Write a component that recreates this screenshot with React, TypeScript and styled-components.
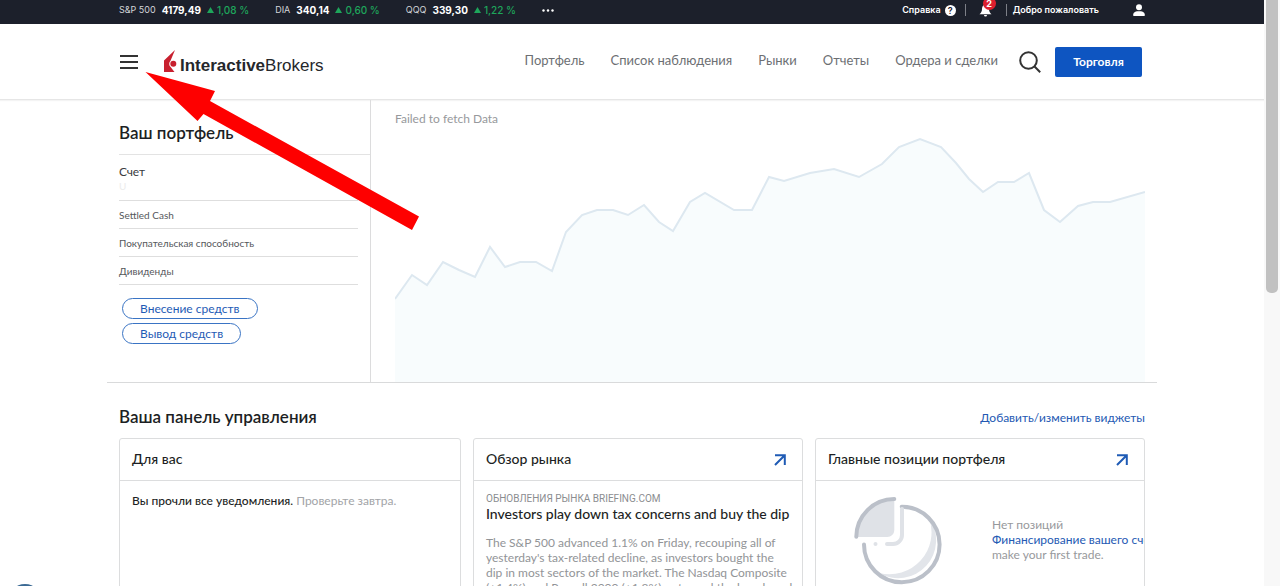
import React from "react";
import styled, { createGlobalStyle } from "styled-components";

const GlobalStyle = createGlobalStyle`
  *, *::before, *::after { box-sizing: border-box; }
  body { margin: 0; background: #fff; color: #1d1f24; font-family: Lato, "Noto Sans", sans-serif; font-size: 12px; line-height: 15px; }
  a { text-decoration: none; color: inherit; }
  h1, h2, h3, p { margin: 0; }
  button { font-family: inherit; cursor: pointer; }
`;

const Window = styled.div`
  display: flex;
  height: 100vh;
  overflow: hidden;
`;
const Page = styled.div`
  flex: 1;
  min-width: 0;
`;
const ScrollTrack = styled.div`
  width: 16px;
  padding: 0 2px;
  background: #f8f8f8;
`;
const ScrollThumb = styled.div`
  height: 50%;
  background: #c1c1c1;
  border-radius: 0 0 5px 5px;
`;
const Container = styled.div`
  position: relative;
  display: flex;
  align-items: center;
  max-width: 1050px;
  margin: 0 auto;
  padding: 0 12px;
`;

const TopBar = styled.div`
  background: #1c202b;
  color: #fff;
  font: 600 9px/20px Inter, sans-serif;
  padding-bottom: 4px;
`;
const Tickers = styled.div`
  display: flex;
  gap: 26px;
  flex: 1;
`;
const Ticker = styled.div`
  display: flex;
  gap: 6px;
`;
const Symbol = styled.span`
  font-weight: 400;
  color: #d3d5d9;
`;
const Price = styled.span`
  font-size: 10px;
  font-weight: 700;
`;
const Change = styled.span`
  display: flex;
  align-items: center;
  gap: 3px;
  font-size: 10px;
  font-weight: 500;
  color: #1ea65b;
`;
const MoreButton = styled.button`
  border: 0;
  padding: 0;
  background: none;
  display: flex;
  align-items: center;
`;
const UserTools = styled.div`
  display: flex;
  align-items: center;
`;
const HelpLink = styled.a`
  display: flex;
  align-items: center;
  gap: 4px;
  padding-right: 9px;
`;
const HelpMark = styled.span`
  width: 11px;
  height: 11px;
  border-radius: 50%;
  background: #fff;
  color: #1c202b;
  text-align: center;
  line-height: 11px;
`;
const Divider = styled.span`
  width: 1px;
  height: 12px;
  background: #7d8088;
`;
const BellButton = styled.button`
  position: relative;
  display: flex;
  border: 0;
  background: none;
  padding: 0 14px 0 13px;
`;
const Badge = styled.span`
  position: absolute;
  left: 17px;
  top: -7px;
  width: 13px;
  height: 13px;
  border-radius: 50%;
  background: #dc1f2e;
  color: #fff;
  font: 700 9px/13px Inter, sans-serif;
  text-align: center;
`;
const Welcome = styled.span`
  padding: 0 34px 0 6px;
`;
const UserButton = styled.button`
  display: flex;
  border: 0;
  background: none;
  padding: 0;
`;

const Header = styled.header`
  border-bottom: 1px solid #e6e6e6;
  box-shadow: 0 1px 1px #f4f4f4;
`;
const HeaderRow = styled(Container)`
  height: 75px;
`;
const MenuButton = styled.button`
  display: flex;
  border: 0;
  background: none;
  padding: 0 26px 0 1px;
`;
const Logo = styled.a`
  display: flex;
  align-items: flex-end;
  gap: 3px;
  padding-bottom: 2px;
  color: #25272b;
  font: 17px/18px "Liberation Sans", Arial, sans-serif;
`;
const LogoText = styled.span`
  height: 15px;
`;
const Nav = styled.nav`
  display: flex;
  gap: 26px;
  margin-left: auto;
  padding-bottom: 4px;
  font-size: 13px;
  line-height: 16px;
  color: #6d6f73;
`;
const SearchButton = styled.button`
  display: flex;
  border: 0;
  background: none;
  padding: 0;
  margin: 0 14px 0 21px;
`;
const TradeButton = styled.button`
  height: 30px;
  min-width: 87px;
  padding: 0 16px;
  margin-right: 3px;
  border: 0;
  border-radius: 2px;
  background: #0e55c1;
  color: #fff;
  font-size: 12px;
  font-weight: 700;
`;
const Pointer = styled.svg`
  position: absolute;
  left: 38px;
  top: 47px;
  z-index: 2;
  pointer-events: none;
`;

const Hero = styled.section`
  display: flex;
  max-width: 1050px;
  margin: 0 auto;
  border-bottom: 1px solid #d9dadb;
`;
const Portfolio = styled.div`
  width: 264px;
  padding-left: 12px;
  border-right: 1px solid #dcdcdd;
`;
const PortfolioTitle = styled.h1`
  padding: 22px 0 10px;
  border-bottom: 1px solid #e3e3e3;
  font-size: 17px;
  font-weight: 600;
  line-height: 22px;
`;
const Figures = styled.div`
  margin-right: 12px;
`;
const Account = styled.div`
  height: 46px;
  padding-top: 9px;
  border-bottom: 1px solid #dedede;
  font-size: 12px;
  line-height: 15px;
  color: #3a3c40;
`;
const AccountId = styled.div`
  font-size: 10px;
  color: #ececec;
`;
const Figure = styled.div`
  height: 28px;
  border-bottom: 1px solid #dedede;
  font-size: 10px;
  line-height: 29px;
  color: #55575b;
`;
const Actions = styled.div`
  display: flex;
  flex-direction: column;
  align-items: flex-start;
  gap: 4px;
  padding: 13px 3px 38px;
`;
const PillButton = styled.button`
  height: 21px;
  padding: 0 17px 1px;
  border: 1px solid #3a74c4;
  border-radius: 11px;
  background: #fff;
  color: #1f5bb5;
  font-size: 12px;
  line-height: 15px;
`;
const ChartPanel = styled.div`
  flex: 1;
  display: flex;
  flex-direction: column;
  padding: 11px 12px 0 24px;
  color: #97999c;
`;
const Chart = styled.svg`
  display: block;
  width: 100%;
  height: 250px;
  margin-top: auto;
`;
const ChartStatus = styled.p`
  height: 21px;
`;

const Dashboard = styled.main`
  max-width: 1050px;
  margin: 0 auto;
  padding: 23px 12px 0;
`;
const DashboardHead = styled.div`
  display: flex;
  align-items: center;
  justify-content: space-between;
  padding-bottom: 10px;
`;
const DashboardTitle = styled.h2`
  font-size: 17px;
  font-weight: 600;
  line-height: 22px;
`;
const TextLink = styled.a`
  color: #2459b3;
`;
const Cards = styled.div`
  display: grid;
  grid-template-columns: 342fr 330fr 330fr;
  gap: 12px;
`;
const Card = styled.section`
  min-width: 0;
  height: 260px;
  border: 1px solid #dcddde;
  border-radius: 3px;
  overflow: hidden;
`;
const CardHead = styled.div`
  display: flex;
  align-items: center;
  justify-content: space-between;
  height: 42px;
  padding: 0 16px 0 12px;
  border-bottom: 1px solid #dcddde;
`;
const CardTitle = styled.h3`
  padding-bottom: 2px;
  font-size: 14px;
  font-weight: 500;
  line-height: 18px;
`;
const CardBody = styled.div`
  padding: 12px;
`;
const Muted = styled.span`
  color: #a2a4a7;
`;
const Notice = styled.p`
  font-weight: 500;
  ${Muted} { font-weight: 400; }
`;
const Source = styled.p`
  font: 10px/12px Roboto, sans-serif;
  color: #8b8d90;
`;
const Headline = styled.h3`
  font-size: 14px;
  font-weight: 500;
  line-height: 18px;
  white-space: nowrap;
`;
const Story = styled.p`
  margin-top: 12px;
  color: #929497;
  white-space: nowrap;
`;
const EmptyState = styled.div`
  display: flex;
  align-items: flex-start;
  gap: 49px;
  padding: 15px 0 0 37px;
  color: #97999c;
  white-space: nowrap;
`;
const EmptyText = styled.div`
  padding-top: 21px;
`;
const Drawing = styled.svg`
  flex: none;
`;
const ChatButton = styled.button`
  position: fixed;
  left: 8px;
  bottom: -32px;
  width: 34px;
  height: 34px;
  border: 2px solid #3b6a94;
  border-radius: 50%;
  background: #fff;
`;

const tickers = [
  ["S&P 500", "4179,49", "1,08 %"],
  ["DIA", "340,14", "0,60 %"],
  ["QQQ", "339,30", "1,22 %"],
];
const sections = ["Портфель", "Список наблюдения", "Рынки", "Отчеты", "Ордера и сделки"];
const figures = ["Settled Cash", "Покупательская способность", "Дивиденды"];
const series =
  "0,167 17,143 32,153 48,130 64,138 80,145 95,115 110,135 125,130 141,130 157,139 171,100 187,83 202,78 218,78 233,83 249,73 264,90 278,99 295,70 310,61 339,78 357,78 374,45 389,49 415,41 439,37 464,45 487,32 504,15 525,7 546,15 561,31 574,47 588,60 603,50 619,50 634,41 649,78 665,90 683,74 698,70 715,70 750,60";

const OpenIcon = () => (
  <svg width="12" height="12" viewBox="0 0 12 12" fill="none" stroke="#1f5bb5" strokeWidth="2">
    <path d="M1 1.2H10.8V11M10.5 1.5L1 11" />
  </svg>
);

const PieDrawing = () => (
  <Drawing width="90" height="90" viewBox="0 0 90 90" fill="none" strokeLinecap="round">
    <path d="M41.3 3V34a7 7 0 0 1-7 7H4A38 38 0 0 1 41.3 3Z" fill="#dfe2e7" />
    <path d="M76 22A38 38 0 0 1 26 77A42 42 0 0 0 76 22Z" fill="#e2e5ea" />
    <path d="M3.3 40.8A38 38 0 0 1 41.3 3" stroke="#bbc0c9" strokeWidth="4" />
    <path d="M48.7 10.7A37.8 37.8 0 1 1 11 48.5" stroke="#bbc0c9" strokeWidth="4" />
    <path d="M49 13V39a9 9 0 0 1-9 9H34" stroke="#dfe2e7" strokeWidth="4" />
    <circle cx="22.5" cy="48" r="2" fill="#dfe2e7" />
  </Drawing>
);

export default function App() {
  return (
    <Window>
      <GlobalStyle />
      <Page>
        <TopBar>
          <Container>
            <Tickers>
              {tickers.map(([symbol, price, change]) => (
                <Ticker key={symbol}>
                  <Symbol>{symbol}</Symbol>
                  <Price>{price}</Price>
                  <Change>
                    <svg width="7" height="6" viewBox="0 0 7 6">
                      <path d="M3.5 0L7 6H0Z" fill="#1ea65b" />
                    </svg>
                    {change}
                  </Change>
                </Ticker>
              ))}
              <MoreButton aria-label="Ещё">
                <svg width="12" height="3" viewBox="0 0 12 3" fill="#fff">
                  <circle cx="1.5" cy="1.5" r="1.2" />
                  <circle cx="6" cy="1.5" r="1.2" />
                  <circle cx="10.5" cy="1.5" r="1.2" />
                </svg>
              </MoreButton>
            </Tickers>
            <UserTools>
              <HelpLink href="#help">
                Справка<HelpMark>?</HelpMark>
              </HelpLink>
              <Divider />
              <BellButton aria-label="Уведомления">
                <svg width="13" height="13" viewBox="0 0 13 13" fill="#fff">
                  <path d="M6.5 0.5C4 0.8 3 2.8 3 5C3 7.6 2 8.8 0.5 10.3H12.5C11 8.8 10 7.6 10 5C10 2.8 9 0.8 6.5 0.5ZM5 11A1.5 1.5 0 0 0 8 11Z" />
                </svg>
                <Badge>2</Badge>
              </BellButton>
              <Divider />
              <Welcome>Добро пожаловать</Welcome>
              <UserButton aria-label="Профиль">
                <svg width="12" height="12" viewBox="0 0 12 12" fill="#fff">
                  <circle cx="6" cy="3.2" r="3" />
                  <path d="M0.3 12V10.2C0.3 8.4 2.4 7.5 4.2 7.2H7.8C9.6 7.5 11.7 8.4 11.7 10.2V12Z" />
                </svg>
              </UserButton>
            </UserTools>
          </Container>
        </TopBar>
        <Header>
          <HeaderRow>
            <MenuButton aria-label="Меню">
              <svg width="18" height="14" viewBox="0 0 18 14" stroke="#333" strokeWidth="2">
                <path d="M0 1H18M0 7H18M0 13H18" />
              </svg>
            </MenuButton>
            <Logo href="#home">
              <svg width="13" height="22" viewBox="0 0 13 22">
                <path d="M11 0L0 10.5V22H10.5L6.6 17C4.9 15.5 4.6 12.6 6.6 10.5Z" fill="#c8202f" />
                <circle cx="9.3" cy="13.8" r="3" fill="#c8202f" />
              </svg>
              <LogoText>
                <b>Interactive</b>Brokers
              </LogoText>
            </Logo>
            <Nav>
              {sections.map((name) => (
                <a key={name} href="#section">
                  {name}
                </a>
              ))}
            </Nav>
            <SearchButton aria-label="Поиск">
              <svg width="22" height="22" viewBox="0 0 22 22" fill="none" stroke="#333" strokeWidth="2">
                <circle cx="9.5" cy="9.5" r="8.3" />
                <path d="M15.3 15.3L21.2 21.2" />
              </svg>
            </SearchButton>
            <TradeButton>Торговля</TradeButton>
            <Pointer width="276" height="160" viewBox="0 0 276 160" aria-hidden="true">
              <path d="M0.5 1L70 20L65 30L274 145.5L267 159L58.5 43L52.5 50Z" fill="#fe0000" />
            </Pointer>
          </HeaderRow>
        </Header>
        <Hero>
          <Portfolio>
            <PortfolioTitle>Ваш портфель</PortfolioTitle>
            <Figures>
              <Account>
                Счет
                <AccountId>U</AccountId>
              </Account>
              {figures.map((name) => (
                <Figure key={name}>{name}</Figure>
              ))}
            </Figures>
            <Actions>
              <PillButton>Внесение средств</PillButton>
              <PillButton>Вывод средств</PillButton>
            </Actions>
          </Portfolio>
          <ChartPanel>
            <ChartStatus>Failed to fetch Data</ChartStatus>
            <Chart viewBox="0 0 750 250" preserveAspectRatio="none">
              <polygon points={`0,250 ${series} 750,250`} fill="#f8fcfd" />
              <polyline points={series} fill="none" stroke="#dde8f0" strokeWidth="2" />
            </Chart>
          </ChartPanel>
        </Hero>
        <Dashboard>
          <DashboardHead>
            <DashboardTitle>Ваша панель управления</DashboardTitle>
            <TextLink href="#widgets">Добавить/изменить виджеты</TextLink>
          </DashboardHead>
          <Cards>
            <Card>
              <CardHead>
                <CardTitle>Для вас</CardTitle>
              </CardHead>
              <CardBody>
                <Notice>
                  Вы прочли все уведомления. <Muted>Проверьте завтра.</Muted>
                </Notice>
              </CardBody>
            </Card>
            <Card>
              <CardHead>
                <CardTitle>Обзор рынка</CardTitle>
                <OpenIcon />
              </CardHead>
              <CardBody>
                <Source>ОБНОВЛЕНИЯ РЫНКА BRIEFING.COM</Source>
                <Headline>Investors play down tax concerns and buy the dip</Headline>
                <Story>
                  The S&amp;P 500 advanced 1.1% on Friday, recouping all of
                  <br />
                  yesterday's tax-related decline, as investors bought the
                  <br />
                  dip in most sectors of the market. The Nasdaq Composite
                  <br />
                  (+1.4%) and Russell 2000 (+1.8%) outpaced the benchmark
                </Story>
              </CardBody>
            </Card>
            <Card>
              <CardHead>
                <CardTitle>Главные позиции портфеля</CardTitle>
                <OpenIcon />
              </CardHead>
              <EmptyState>
                <PieDrawing />
                <EmptyText>
                  <p>Нет позиций</p>
                  <TextLink href="#funding">Финансирование вашего счета</TextLink>
                  <p>make your first trade.</p>
                </EmptyText>
              </EmptyState>
            </Card>
          </Cards>
        </Dashboard>
      </Page>
      <ScrollTrack>
        <ScrollThumb />
      </ScrollTrack>
      <ChatButton aria-label="Чат" />
    </Window>
  );
}
